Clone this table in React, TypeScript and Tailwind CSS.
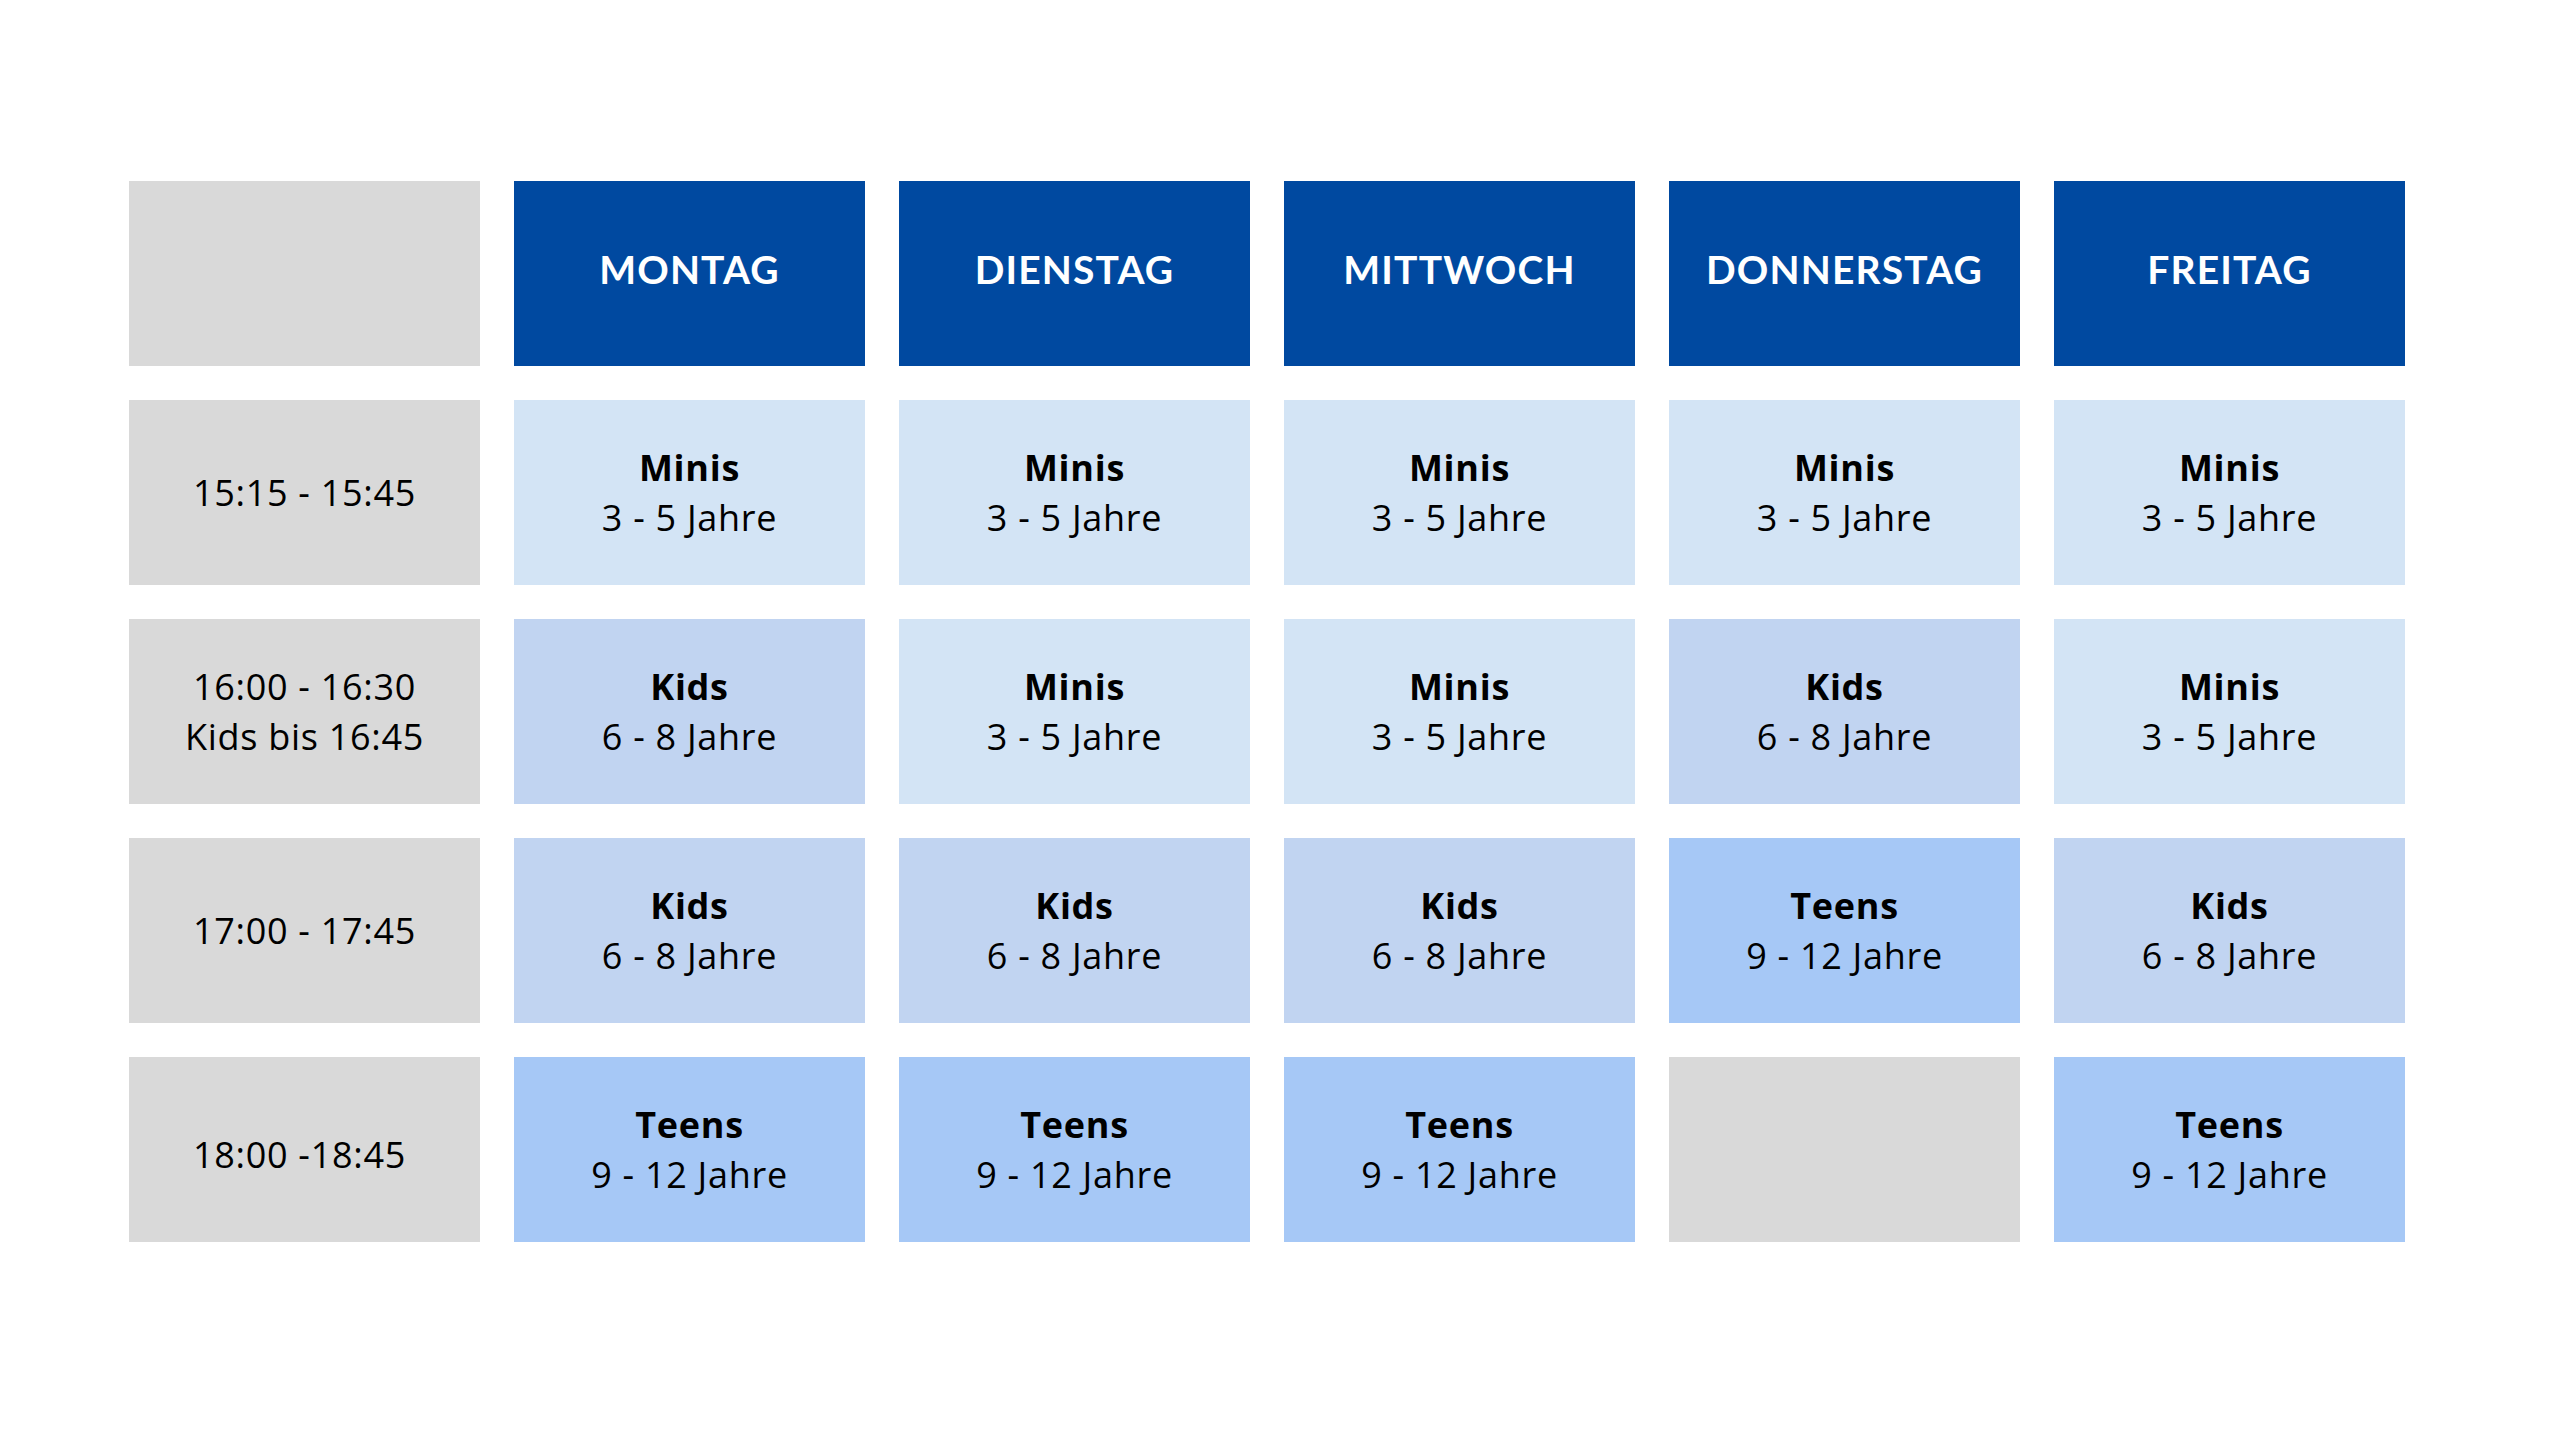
const days = ["MONTAG", "DIENSTAG", "MITTWOCH", "DONNERSTAG", "FREITAG"];

type Group = "minis" | "kids" | "teens" | null;

const groups = {
  minis: { name: "Minis", age: "3 - 5 Jahre", bg: "bg-[#d3e4f5]" },
  kids: { name: "Kids", age: "6 - 8 Jahre", bg: "bg-[#c1d4f1]" },
  teens: { name: "Teens", age: "9 - 12 Jahre", bg: "bg-[#a6c8f6]" },
};

const rows: { time: string[]; slots: Group[]; shift?: boolean }[] = [
  { time: ["15:15 - 15:45"], slots: ["minis", "minis", "minis", "minis", "minis"] },
  { time: ["16:00 - 16:30", "Kids bis 16:45"], slots: ["kids", "minis", "minis", "kids", "minis"] },
  { time: ["17:00 - 17:45"], slots: ["kids", "kids", "kids", "teens", "kids"] },
  { time: ["18:00 -18:45\u00a0"], slots: ["teens", "teens", "teens", null, "teens"], shift: true },
];

const Slot = ({ group }: { group: Group }) => {
  if (!group) return <div className="bg-[#d9d9d9]" />;
  const g = groups[group];
  return (
    <div className={`${g.bg} flex flex-col items-center justify-center text-[36px] leading-[50px] tracking-[0.02em] text-black`}>
      <span className="font-bold">{g.name}</span>
      <span>{g.age}</span>
    </div>
  );
};

export default function App() {
  return (
    <div className="min-h-screen bg-white pt-[181px] pl-[129px] font-['Open_Sans',sans-serif]">
      <div className="grid grid-cols-[repeat(6,351px)] auto-rows-[185px] gap-[34px]">
        <div className="bg-[#d9d9d9]" />
        {days.map((d) => (
          <div
            key={d}
            className="bg-[#0049a0] flex items-center justify-center pb-[8px] text-white text-[39px] font-bold tracking-[0.03em] font-['Lato',sans-serif]"
          >
            {d}
          </div>
        ))}
        {rows.map((r, i) => (
          <div key={i} className="contents">
            <div
              className={`bg-[#d9d9d9] flex flex-col items-center justify-center text-[36px] leading-[50px] tracking-[0.02em] text-black ${
                r.shift ? "pt-[10px]" : ""
              }`}
            >
              {r.time.map((t) => (
                <span key={t} className="whitespace-pre">
                  {t}
                </span>
              ))}
            </div>
            {r.slots.map((s, j) => (
              <Slot key={j} group={s} />
            ))}
          </div>
        ))}
      </div>
    </div>
  );
}
